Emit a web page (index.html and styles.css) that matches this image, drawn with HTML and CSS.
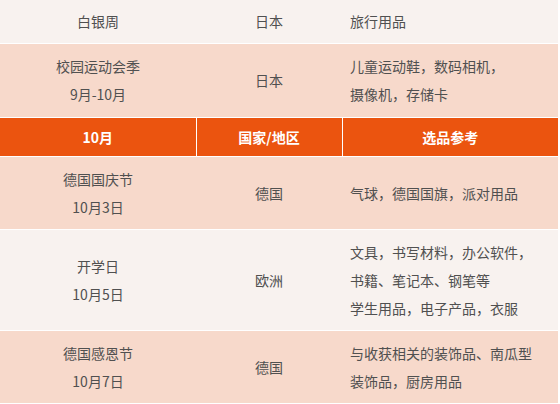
FILE: index.html
```html
<!DOCTYPE html>
<html lang="zh">
<head>
<meta charset="utf-8">
<link rel="stylesheet" href="styles.css">
</head>
<body>
<table class="calendar">
  <colgroup>
    <col class="col-event">
    <col class="col-region">
    <col class="col-goods">
  </colgroup>
  <tbody>
    <tr class="row-light row-first">
      <td class="c">白银周</td>
      <td class="c">日本</td>
      <td class="l">旅行用品</td>
    </tr>
    <tr class="row-peach row-second">
      <td class="c">校园运动会季<br>9月-10月</td>
      <td class="c">日本</td>
      <td class="l">儿童运动鞋，数码相机，<br>摄像机，存储卡</td>
    </tr>
    <tr class="row-head">
      <th>10月</th>
      <th>国家/地区</th>
      <th>选品参考</th>
    </tr>
    <tr class="row-peach">
      <td class="c">德国国庆节<br>10月3日</td>
      <td class="c">德国</td>
      <td class="l">气球，德国国旗，派对用品</td>
    </tr>
    <tr class="row-light">
      <td class="c">开学日<br>10月5日</td>
      <td class="c">欧洲</td>
      <td class="l">文具，书写材料，办公软件，<br>书籍、笔记本、钢笔等<br>学生用品，电子产品，衣服</td>
    </tr>
    <tr class="row-peach">
      <td class="c">德国感恩节<br>10月7日</td>
      <td class="c">德国</td>
      <td class="l">与收获相关的装饰品、南瓜型<br>装饰品，厨房用品</td>
    </tr>
  </tbody>
</table>
</body>
</html>
```
FILE: styles.css
```css
html, body {
  margin: 0;
  padding: 0;
  background: #ffffff;
}

.calendar {
  width: 558px;
  border-collapse: collapse;
  table-layout: fixed;
  font-family: "Microsoft YaHei", "Noto Sans CJK SC", "Liberation Sans", sans-serif;
  font-size: 14px;
  color: #505050;
}

.col-event { width: 196px; }
.col-region { width: 146px; }
.col-goods { width: 216px; }

.calendar td,
.calendar th {
  padding: 8px 8px;
  line-height: 28px;
  vertical-align: middle;
  border-bottom: 1px solid #ffffff;
}

.calendar td.c { text-align: center; }
.calendar td.l { text-align: left; }

.row-first td {
  padding-top: 7px;
}

.row-second td {
  padding-bottom: 9px;
}

.row-light td { background: #f8f2ef; }
.row-peach td { background: #f7d9cb; }

.row-head th {
  background: #eb540f;
  color: #ffffff;
  font-weight: bold;
  text-align: center;
  padding: 5px 8px;
  border-top: 1px solid #ffffff;
  border-bottom: 1px solid #ffffff;
}

.row-head th + th {
  border-left: 1px solid #ffffff;
}
```
